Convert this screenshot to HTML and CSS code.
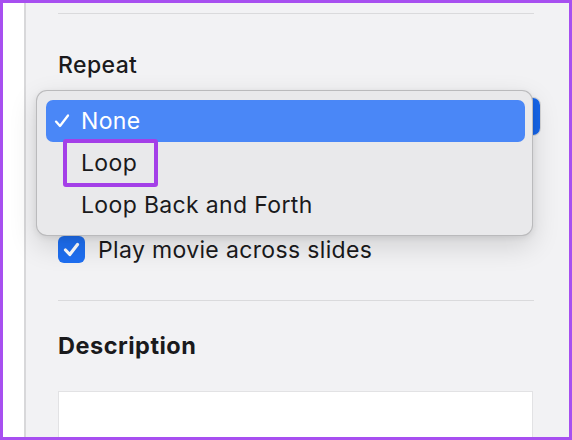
FILE: index.html
```html
<!DOCTYPE html>
<html>
<head>
<meta charset="utf-8">
<link rel="stylesheet" href="styles.css">
</head>
<body>
<div class="frame">
  <div class="sidebar"></div>
  <div class="panel">
    <div class="divider first"></div>
    <div class="label">Repeat</div>
    <div class="popup-wrap">
      <div class="popup"><span class="popup-arrow"></span></div>
      <div class="menu">
        <div class="item selected">
          <svg class="check" viewBox="0 0 16 16" width="16" height="16"><path d="M2 8.6 L6 13 L14 2.5" fill="none" stroke="#fff" stroke-width="2.3" stroke-linecap="round" stroke-linejoin="round"/></svg>
          <span>None</span>
        </div>
        <div class="item"><span class="loop">Loop<span class="highlight-box"></span></span></div>
        <div class="item">Loop Back and Forth</div>
      </div>
    </div>
    <div class="checkrow">
      <span class="checkbox">
        <svg viewBox="0 0 27 27" width="27" height="27"><path d="M7.5 14 L11.8 18.5 L19.5 8.5" fill="none" stroke="#fff" stroke-width="3.2" stroke-linecap="round" stroke-linejoin="round"/></svg>
      </span>
      <span>Play movie across slides</span>
    </div>
    <div class="divider second"></div>
    <div class="label bold">Description</div>
    <div class="textarea"></div>
  </div>
</div>
</body>
</html>
```
FILE: styles.css
```css
* { box-sizing: border-box; }
html, body { margin: 0; padding: 0; }
body {
  width: 572px;
  height: 440px;
  overflow: hidden;
  font-family: Inter, "Noto Sans", sans-serif;
  color: #1a1a1c;
}
.frame {
  width: 572px;
  height: 440px;
  border: 3px solid #a74ff0;
  display: flex;
  overflow: hidden;
}
.sidebar {
  width: 23px;
  background: #ffffff;
  border-right: 2px solid #d8d8da;
  flex: none;
}
.panel {
  flex: 1;
  min-width: 0;
  background: #f2f2f4;
  padding: 0 35px 0 32px;
  display: flex;
  flex-direction: column;
  min-height: 0;
}
.divider {
  height: 1px;
  background: #dadadc;
  flex: none;
}
.divider.first { margin-top: 10px; }
.label {
  font-size: 23px;
  letter-spacing: 0.4px;
  line-height: 26px;
  font-weight: 500;
  margin-top: 38px;
}
.label.bold { font-weight: 700; font-size: 23.5px; margin-top: 32px; letter-spacing: 0.5px; }
.popup-wrap {
  position: relative;
  margin-top: 20px;
  height: 37px;
  flex: none;
}
.popup {
  width: calc(100% + 6px);
  height: 37px;
  background: #ffffff;
  border-radius: 7px;
  box-shadow: 0 0 0 1px rgba(0,0,0,0.12);
  position: relative;
}
.popup-arrow {
  position: absolute;
  right: 0;
  top: 0;
  width: 22px;
  height: 37px;
  background: #1766ea;
  border-radius: 0 7px 7px 0;
}
.menu {
  position: absolute;
  left: -22px;
  top: -8px;
  width: 497px;
  height: 146px;
  background: #e9e9eb;
  border: 1px solid rgba(0,0,0,0.2);
  border-radius: 11px;
  box-shadow: 0 10px 28px rgba(0,0,0,0.14), 0 2px 6px rgba(0,0,0,0.08);
  padding: 9px 7px 8px 9px;
  z-index: 2;
}
.item {
  height: 42px;
  display: flex;
  align-items: center;
  padding-left: 35px;
  font-size: 23px;
  letter-spacing: 0.35px;
  position: relative;
}
.item.selected {
  background: #4a87f7;
  color: #ffffff;
  border-radius: 7px;
}
.check {
  position: absolute;
  left: 8px;
  top: 13px;
}
.loop { position: relative; }
.highlight-box {
  position: absolute;
  left: -18px;
  right: -21px;
  top: -10px;
  bottom: -10px;
  border: 4px solid #a43fe8;
  border-radius: 3px;
}
.checkrow {
  margin-top: 101px;
  display: flex;
  align-items: center;
  gap: 13px;
  font-size: 23px;
  letter-spacing: 0.35px;
  height: 27px;
  flex: none;
}
.checkbox {
  width: 27px;
  height: 27px;
  border-radius: 6px;
  background: #1e6ff2;
  display: block;
  flex: none;
}
.checkbox svg { display: block; }
.divider.second { margin-top: 37px; }
.textarea {
  margin-top: 32px;
  margin-right: 1px;
  flex: 1;
  background: #ffffff;
  border: 1px solid #e2e2e4;
  border-bottom: none;
}
```
